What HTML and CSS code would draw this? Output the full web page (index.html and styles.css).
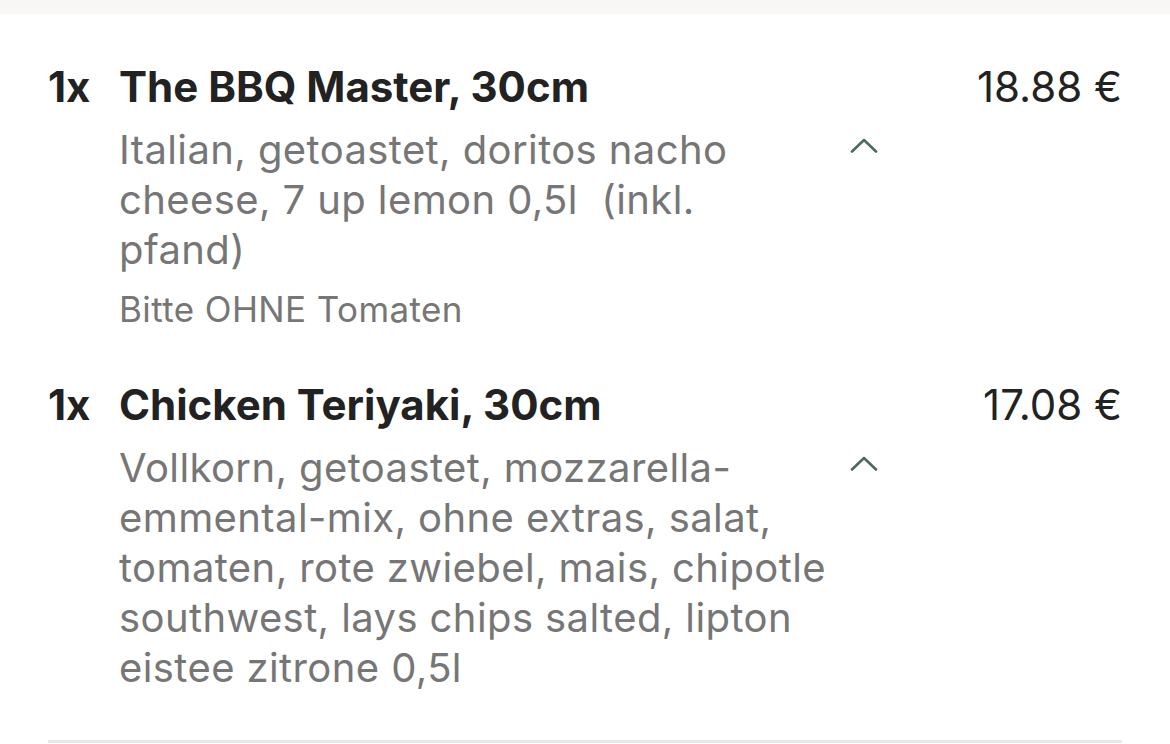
FILE: index.html
```html
<!DOCTYPE html>
<html lang="de">
<head>
    <meta charset="UTF-8">
    <meta name="viewport" content="width=device-width, initial-scale=1.0">
    <title>Warenkorb</title>
    <link rel="stylesheet" href="styles.css">
</head>
<body>

<div class="top-band"></div>

<div class="cart">
    <div class="item first">
        <div class="qty">1x</div>
        <div class="main">
            <div class="name">The BBQ Master, 30cm</div>
            <div class="details">
                <div class="desc">
                    <p class="options">Italian, getoastet, doritos nacho<br>cheese, 7 up lemon 0,5l &nbsp;(inkl.<br>pfand)</p>
                    <p class="note">Bitte OHNE Tomaten</p>
                </div>
                <svg class="chevron" width="28" height="15" viewBox="0 0 28 15">
                    <path d="M2 13.5 L14 2 L26 13.5" fill="none" stroke="#4b6a62" stroke-width="2.6" stroke-linecap="round" stroke-linejoin="round"/>
                </svg>
            </div>
        </div>
        <div class="price">18.88 €</div>
    </div>

    <div class="item second">
        <div class="qty">1x</div>
        <div class="main">
            <div class="name">Chicken Teriyaki, 30cm</div>
            <div class="details">
                <div class="desc">
                    <p class="options">Vollkorn, getoastet, mozzarella-<br>emmental-mix, ohne extras, salat,<br>tomaten, rote zwiebel, mais, chipotle<br>southwest, lays chips salted, lipton<br>eistee zitrone 0,5l</p>
                </div>
                <svg class="chevron" width="28" height="15" viewBox="0 0 28 15">
                    <path d="M2 13.5 L14 2 L26 13.5" fill="none" stroke="#4b6a62" stroke-width="2.6" stroke-linecap="round" stroke-linejoin="round"/>
                </svg>
            </div>
        </div>
        <div class="price">17.08 €</div>
    </div>

    <div class="divider"></div>
</div>

</body>
</html>
```

FILE: styles.css
```css
body {
    margin: 0;
    background-color: #fff;
    font-family: Inter, "Noto Sans", sans-serif;
    color: #222;
}

.top-band {
    height: 14px;
    background-color: #f8f7f5;
}

.cart {
    padding: 0 48px;
}

.item {
    display: flex;
    align-items: flex-start;
}

.item.first {
    padding-top: 48px;
}

.item.second {
    margin-top: 49px;
}

.qty {
    width: 71px;
    font-size: 42px;
    font-weight: 700;
    line-height: 50px;
}

.main {
    flex: 1;
}

.name {
    font-size: 42px;
    font-weight: 700;
    line-height: 50px;
}

.details {
    display: flex;
    align-items: flex-start;
    margin-top: 13px;
}

.desc {
    width: 726px;
    flex-shrink: 0;
}

.options {
    margin: 0;
    font-size: 40px;
    letter-spacing: 0.4px;
    line-height: 50px;
    color: #767676;
    white-space: nowrap;
}

.note {
    margin: 12px 0 0;
    font-size: 35px;
    letter-spacing: 0.4px;
    line-height: 44px;
    color: #767676;
}

.chevron {
    margin: 13px 0 0 5px;
}

.price {
    font-size: 42px;
    line-height: 50px;
    color: #222;
    white-space: nowrap;
}

.divider {
    margin-top: 47px;
    height: 3px;
    background-color: #e8e8e8;
}
```
